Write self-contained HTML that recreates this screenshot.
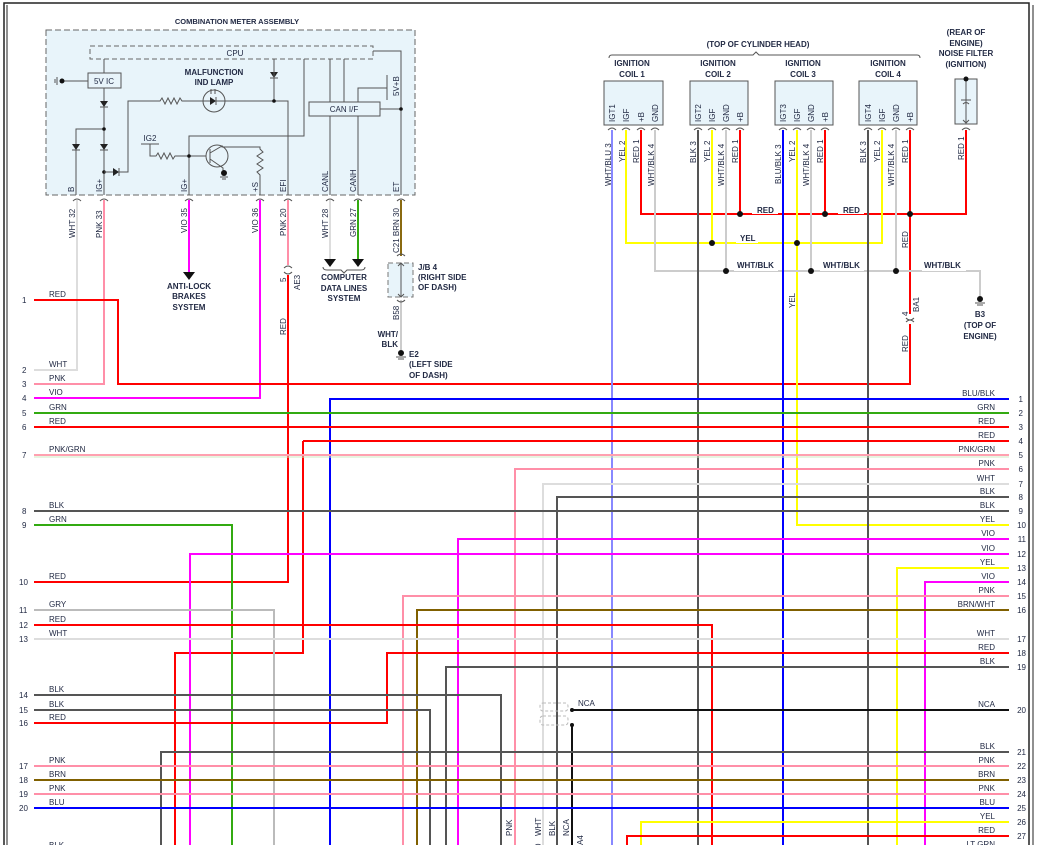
<!DOCTYPE html>
<html><head><meta charset="utf-8"><style>
html,body{margin:0;padding:0;background:#fff;width:1037px;height:845px;overflow:hidden}
svg{display:block}
text{font-family:"Liberation Sans",sans-serif;font-size:8px;fill:#222a44;font-weight:bold}
.n{font-weight:normal;font-size:8px}
.w{fill:none;stroke-width:2}
.t{fill:none;stroke:#555;stroke-width:1}
</style></head><body>
<svg width="1037" height="845" viewBox="0 0 1037 845" xmlns="http://www.w3.org/2000/svg">
<!-- frame -->
<path d="M4 845V3H1029V845" fill="none" stroke="#222" stroke-width="1.5"/>
<path d="M7 845V5" stroke="#222" stroke-width="1"/>
<path d="M1033 845V5" stroke="#222" stroke-width="1"/>

<!-- meter box -->
<rect x="46" y="30" width="369" height="165" fill="#e8f4fa" stroke="#666" stroke-dasharray="6,3"/>
<text x="237" y="24" text-anchor="middle" style="font-size:7.5px">COMBINATION METER ASSEMBLY</text>
<rect x="90" y="46" width="283" height="13" fill="none" stroke="#666" stroke-dasharray="5,3"/>
<text x="235" y="56" text-anchor="middle" class="n">CPU</text>
<rect x="88" y="73" width="33" height="15" fill="#e8f4fa" stroke="#555"/>
<text x="104" y="84" text-anchor="middle" class="n">5V IC</text>
<path class="t" d="M60 81H88M57 77V85M55 79V83"/><circle cx="62" cy="81" r="2.5" fill="#111"/>
<path class="t" d="M104 59V73M104 88V195M104 129H76V195"/>
<path d="M100 101h8l-4 6zM100 144h8l-4 6zM72 144h8l-4 6zM270 72h8l-4 6z" fill="#222"/>
<path class="t" d="M100 107h8M100 150h8M72 150h8M270 78h8"/>
<circle cx="104" cy="129" r="1.8" fill="#111"/><circle cx="104" cy="172" r="1.8" fill="#111"/>
<path class="t" d="M104 172H128V101H160l2-3 3 6 3-6 3 6 3-6 3 6 3-6 2 3H288V195M274 59V101"/>
<path d="M113 168v8l6-4z" fill="#222"/><path class="t" d="M119 168v8"/>
<circle cx="214" cy="101" r="11" fill="none" stroke="#555"/>
<path d="M210 97v8l6-4z" fill="#222"/><path class="t" d="M216 97v8M211 89v5M215 89v5"/>
<circle cx="274" cy="101" r="1.8" fill="#111"/>
<text x="214" y="75" text-anchor="middle">MALFUNCTION</text><text x="214" y="85" text-anchor="middle">IND LAMP</text>
<text x="150" y="141" text-anchor="middle" class="n">IG2</text>
<path class="t" d="M141 144H159M150 144V156H156l2-3 3 6 3-6 3 6 3-6 3 6 2-3H206M189 156V195M189 156V136H304V59"/>
<circle cx="189" cy="156" r="1.8" fill="#111"/>
<circle cx="217" cy="156" r="11" fill="none" stroke="#555"/>
<path class="t" d="M210 149V163M210 153L222 146V147H260V149l3 3-6 4 6 4-6 4 6 4-6 4 3 3V195M210 159L223 168V172"/>
<circle cx="224" cy="173" r="3" fill="#111"/><path class="t" d="M220 177h8M222 179h4"/>
<path class="t" d="M330 59V195M344 59V102M358 116V195M358 102V88H387M387 75V100M373 51H401V195M380 109H401"/>
<rect x="309" y="102" width="71" height="14" fill="#e8f4fa" stroke="#555"/>
<text x="344" y="112" text-anchor="middle" class="n">CAN I/F</text>
<circle cx="401" cy="109" r="1.8" fill="#111"/>
<g class="n">
<text transform="translate(399,96) rotate(-90)" class="n">5V+B</text>
<text transform="translate(74,192) rotate(-90)" class="n">B</text>
<text transform="translate(102,192) rotate(-90)" class="n">IG+</text>
<text transform="translate(187,192) rotate(-90)" class="n">IG+</text>
<text transform="translate(258,192) rotate(-90)" class="n">+S</text>
<text transform="translate(286,192) rotate(-90)" class="n">EFI</text>
<text transform="translate(328,192) rotate(-90)" class="n">CANL</text>
<text transform="translate(356,192) rotate(-90)" class="n">CANH</text>
<text transform="translate(399,192) rotate(-90)" class="n">ET</text>
</g>
<!-- meter wires -->
<path class="w" stroke="#ddd" d="M77 200V370H34"/>
<path class="w" stroke="#ff8fa8" d="M104 200V384H34"/>
<path class="w" stroke="#f0f" d="M189 200V272"/>
<path d="M183 272h12l-6 8z" fill="#111"/>
<text x="189" y="289" text-anchor="middle">ANTI-LOCK</text><text x="189" y="299" text-anchor="middle">BRAKES</text><text x="189" y="310" text-anchor="middle">SYSTEM</text>
<path class="w" stroke="#f0f" d="M260 200V398H34"/>
<path class="w" stroke="#ff8fa8" d="M288 200V265"/>
<path class="w" stroke="#f00" d="M288 275V582H34"/>
<path class="w" stroke="#ddd" d="M330 200V260"/><path d="M324 259h12l-6 8z" fill="#111"/>
<path class="w" stroke="#33aa11" d="M358 200V260"/><path d="M352 259h12l-6 8z" fill="#111"/>
<path class="t" d="M323 267q0 3 4 3h14l3 3 3-3h14q4 0 4-3"/>
<text x="344" y="280" text-anchor="middle">COMPUTER</text><text x="344" y="291" text-anchor="middle">DATA LINES</text><text x="344" y="301" text-anchor="middle">SYSTEM</text>
<path class="w" stroke="#8a6a10" d="M401 200V256"/>
<rect x="388" y="263" width="25" height="34" fill="#e8f4fa" stroke="#777" stroke-dasharray="5,3"/>
<path class="t" d="M401 263V297M398 266l3-3 3 3M398 294l3 3 3-3"/>
<text x="418" y="270">J/B 4</text><text x="418" y="280">(RIGHT SIDE</text><text x="418" y="290">OF DASH)</text>
<path class="w" stroke="#ccc" d="M401 300V350"/>
<circle cx="401" cy="353" r="3" fill="#111"/><path class="t" d="M396 357h10M398 359h6"/>
<text x="409" y="357">E2</text><text x="409" y="367">(LEFT SIDE</text><text x="409" y="378">OF DASH)</text>
<text x="398" y="337" text-anchor="end">WHT/</text><text x="398" y="347" text-anchor="end">BLK</text>
<g class="t"><path d="M73 201q4-4 8 0M100 201q4-4 8 0M185 201q4-4 8 0M256 201q4-4 8 0M284 201q4-4 8 0M326 201q4-4 8 0M354 201q4-4 8 0M397 201q4-4 8 0M284 268q4-4 8 0M284 272q4 4 8 0M397 256q4-4 8 0M397 300q4 4 8 0"/></g>
<g>
<text transform="translate(75,238) rotate(-90)" class="n">WHT  32</text>
<text transform="translate(102,238) rotate(-90)" class="n">PNK  33</text>
<text transform="translate(187,233) rotate(-90)" class="n">VIO  35</text>
<text transform="translate(258,233) rotate(-90)" class="n">VIO  36</text>
<text transform="translate(286,236) rotate(-90)" class="n">PNK  20</text>
<text transform="translate(328,238) rotate(-90)" class="n">WHT  28</text>
<text transform="translate(356,237) rotate(-90)" class="n">GRN  27</text>
<text transform="translate(399,253) rotate(-90)" class="n">C21 BRN  30</text>
<text transform="translate(399,320) rotate(-90)" class="n">B58</text>
<text transform="translate(286,282) rotate(-90)" class="n">5</text>
<text transform="translate(300,290) rotate(-90)" class="n">AE3</text>
<text transform="translate(286,335) rotate(-90)" class="n">RED</text>
</g>

<!-- ignition coils -->
<text x="758" y="47" text-anchor="middle">(TOP OF CYLINDER HEAD)</text>
<path class="t" d="M609 58q0-3 3-3H753l3-3 3 3H917q3 0 3 3"/>
<g text-anchor="middle">
<text x="632" y="66">IGNITION</text><text x="632" y="77">COIL 1</text>
<text x="718" y="66">IGNITION</text><text x="718" y="77">COIL 2</text>
<text x="803" y="66">IGNITION</text><text x="803" y="77">COIL 3</text>
<text x="888" y="66">IGNITION</text><text x="888" y="77">COIL 4</text>
<text x="966" y="35">(REAR OF</text><text x="966" y="46">ENGINE)</text><text x="966" y="56">NOISE FILTER</text><text x="966" y="67">(IGNITION)</text>
</g>
<g fill="#e8f4fa" stroke="#555">
<rect x="604" y="81" width="59" height="44"/><rect x="690" y="81" width="58" height="44"/>
<rect x="775" y="81" width="58" height="44"/><rect x="859" y="81" width="58" height="44"/>
<rect x="955" y="79" width="22" height="45"/>
</g>
<path class="t" d="M966 79V124M961 100h10M963 104q3-3 6 0M963 120l3 3 3-3"/><circle cx="966" cy="79" r="2.5" fill="#111"/>
<g class="n">
<text transform="translate(615,122) rotate(-90)" class="n">IGT1</text><text transform="translate(629,122) rotate(-90)" class="n">IGF</text><text transform="translate(644,122) rotate(-90)" class="n">+B</text><text transform="translate(658,122) rotate(-90)" class="n">GND</text>
<text transform="translate(701,122) rotate(-90)" class="n">IGT2</text><text transform="translate(715,122) rotate(-90)" class="n">IGF</text><text transform="translate(729,122) rotate(-90)" class="n">GND</text><text transform="translate(743,122) rotate(-90)" class="n">+B</text>
<text transform="translate(786,122) rotate(-90)" class="n">IGT3</text><text transform="translate(800,122) rotate(-90)" class="n">IGF</text><text transform="translate(814,122) rotate(-90)" class="n">GND</text><text transform="translate(828,122) rotate(-90)" class="n">+B</text>
<text transform="translate(871,122) rotate(-90)" class="n">IGT4</text><text transform="translate(885,122) rotate(-90)" class="n">IGF</text><text transform="translate(899,122) rotate(-90)" class="n">GND</text><text transform="translate(913,122) rotate(-90)" class="n">+B</text>
</g>
<g class="t"><path d="M608 130q4-4 8 0M622 130q4-4 8 0M637 130q4-4 8 0M651 130q4-4 8 0M694 130q4-4 8 0M708 130q4-4 8 0M722 130q4-4 8 0M736 130q4-4 8 0M779 130q4-4 8 0M793 130q4-4 8 0M807 130q4-4 8 0M821 130q4-4 8 0M864 130q4-4 8 0M878 130q4-4 8 0M892 130q4-4 8 0M906 130q4-4 8 0M962 130q4-4 8 0M906 318q4 4 8 0M906 322q4-4 8 0"/></g>
<!-- coil wires -->
<path class="w" stroke="#f00" d="M641 130V214H966V130M740 130V214M825 130V214M910 130V314M910 324V384H118V300H34"/>
<path class="w" stroke="#ff0" d="M626 130V243H882V130M712 130V243M797 130V525H1009"/>
<path class="w" stroke="#ccc" d="M655 130V271H980V296M726 130V271M811 130V271M896 130V271"/>
<circle cx="980" cy="299" r="3" fill="#111"/><path class="t" d="M975 303h10M977 305h6"/>
<text x="980" y="317" text-anchor="middle">B3</text><text x="980" y="328" text-anchor="middle">(TOP OF</text><text x="980" y="339" text-anchor="middle">ENGINE)</text>
<path class="w" stroke="#88f" stroke-width="1.5" d="M612 130V845"/>
<path class="w" stroke="#555" d="M698 130V845M868 130V845"/>
<path class="w" stroke="#00f" d="M783 130V845"/>
<g fill="#111"><circle cx="740" cy="214" r="3"/><circle cx="825" cy="214" r="3"/><circle cx="910" cy="214" r="3"/><circle cx="712" cy="243" r="3"/><circle cx="797" cy="243" r="3"/><circle cx="726" cy="271" r="3"/><circle cx="811" cy="271" r="3"/><circle cx="896" cy="271" r="3"/></g>
<g fill="#fff"><rect x="752" y="206" width="26" height="8"/><rect x="838" y="206" width="26" height="8"/><rect x="736" y="235" width="22" height="8"/><rect x="734" y="262" width="44" height="9"/><rect x="820" y="262" width="44" height="9"/><rect x="922" y="262" width="44" height="9"/></g>
<text x="757" y="213">RED</text><text x="843" y="213">RED</text><text x="740" y="241">YEL</text>
<text x="737" y="268">WHT/BLK</text><text x="823" y="268">WHT/BLK</text><text x="924" y="268">WHT/BLK</text>
<g>
<text transform="translate(611,186) rotate(-90)" class="n">WHT/BLU  3</text>
<text transform="translate(625,162) rotate(-90)" class="n">YEL  2</text>
<text transform="translate(639,163) rotate(-90)" class="n">RED  1</text>
<text transform="translate(654,186) rotate(-90)" class="n">WHT/BLK  4</text>
<text transform="translate(696,163) rotate(-90)" class="n">BLK  3</text>
<text transform="translate(710,162) rotate(-90)" class="n">YEL  2</text>
<text transform="translate(724,186) rotate(-90)" class="n">WHT/BLK  4</text>
<text transform="translate(738,163) rotate(-90)" class="n">RED  1</text>
<text transform="translate(781,184) rotate(-90)" class="n">BLU/BLK  3</text>
<text transform="translate(795,162) rotate(-90)" class="n">YEL  2</text>
<text transform="translate(809,186) rotate(-90)" class="n">WHT/BLK  4</text>
<text transform="translate(823,163) rotate(-90)" class="n">RED  1</text>
<text transform="translate(866,163) rotate(-90)" class="n">BLK  3</text>
<text transform="translate(880,162) rotate(-90)" class="n">YEL  2</text>
<text transform="translate(894,186) rotate(-90)" class="n">WHT/BLK  4</text>
<text transform="translate(908,163) rotate(-90)" class="n">RED  1</text>
<text transform="translate(964,160) rotate(-90)" class="n">RED  1</text>
<text transform="translate(908,248) rotate(-90)" class="n">RED</text>
<text transform="translate(795,308) rotate(-90)" class="n">YEL</text>
<text transform="translate(908,352) rotate(-90)" class="n">RED</text>
<text transform="translate(908,316) rotate(-90)" class="n">4</text>
<text transform="translate(919,312) rotate(-90)" class="n">BA1</text>
</g>

<!-- harness rows -->
<g class="w">
<path stroke="#00f" d="M330 845V399H1009"/>
<path stroke="#33aa11" d="M34 413H1009"/>
<path stroke="#f00" d="M34 427H1009"/>
<path stroke="#f00" d="M303 441H1009M303 441V653H175V845"/>
<path stroke="#ffa0b0" d="M34 455H1009"/>
<path stroke="#cfe8c0" stroke-width="1" d="M34 457H1009"/>
<path stroke="#ff8fa8" d="M515 845V469H1009"/>
<path stroke="#ddd" d="M543 845V484H1009"/>
<path stroke="#555" d="M557 845V497H1009"/>
<path stroke="#555" d="M34 511H1009"/>
<path stroke="#33aa11" d="M34 525H232V845"/>
<path stroke="#f0f" d="M458 845V539H1009"/>
<path stroke="#f0f" d="M190 845V554H1009"/>
<path stroke="#ff0" d="M897 845V568H1009"/>
<path stroke="#f0f" d="M925 845V582H1009"/>
<path stroke="#ff8fa8" d="M403 845V596H1009"/>
<path stroke="#806000" d="M417 845V610H1009"/>
<path stroke="#bbb" d="M34 610H274V845"/>
<path stroke="#f00" d="M34 625H712V845"/>
<path stroke="#ddd" d="M34 639H1009"/>
<path stroke="#f00" d="M34 723H387V653H1009"/>
<path stroke="#555" d="M446 845V667H1009"/>
<path stroke="#555" d="M34 695H501V845"/>
<path stroke="#555" d="M34 710H430V845"/>
<path stroke="#111" d="M572 710H1009M572 725V845"/>
<path stroke="#555" d="M161 845V752H1009"/>
<path stroke="#ff8fa8" d="M34 766H1009"/>
<path stroke="#806000" d="M34 780H1009"/>
<path stroke="#ff8fa8" d="M34 794H1009"/>
<path stroke="#00f" d="M34 808H1009"/>
<path stroke="#ff0" d="M641 845V822H1009"/>
<path stroke="#f00" d="M627 845V836H1009"/>
</g>
<rect x="540" y="703" width="28" height="8" rx="3" fill="none" stroke="#bbb" stroke-dasharray="3,2"/>
<rect x="540" y="716" width="28" height="9" rx="3" fill="none" stroke="#bbb" stroke-dasharray="3,2"/>
<circle cx="572" cy="710" r="2" fill="#111"/><circle cx="572" cy="725" r="2" fill="#111"/>
<text x="578" y="706" class="n">NCA</text>
<g>
<text transform="translate(512,836) rotate(-90)" class="n">PNK</text>
<text transform="translate(541,836) rotate(-90)" class="n">WHT</text>
<text transform="translate(541,848) rotate(-90)" class="n">0</text>
<text transform="translate(555,836) rotate(-90)" class="n">BLK</text>
<text transform="translate(569,836) rotate(-90)" class="n">NCA</text>
<text transform="translate(583,845) rotate(-90)" class="n">A4</text>
</g>
<!-- left labels -->
<g class="n">
<text x="22" y="303" class="n">1</text><text x="49" y="297" class="n">RED</text>
<text x="22" y="373" class="n">2</text><text x="49" y="367" class="n">WHT</text>
<text x="22" y="387" class="n">3</text><text x="49" y="381" class="n">PNK</text>
<text x="22" y="401" class="n">4</text><text x="49" y="395" class="n">VIO</text>
<text x="22" y="416" class="n">5</text><text x="49" y="410" class="n">GRN</text>
<text x="22" y="430" class="n">6</text><text x="49" y="424" class="n">RED</text>
<text x="22" y="458" class="n">7</text><text x="49" y="452" class="n">PNK/GRN</text>
<text x="22" y="514" class="n">8</text><text x="49" y="508" class="n">BLK</text>
<text x="22" y="528" class="n">9</text><text x="49" y="522" class="n">GRN</text>
<text x="19" y="585" class="n">10</text><text x="49" y="579" class="n">RED</text>
<text x="19" y="613" class="n">11</text><text x="49" y="607" class="n">GRY</text>
<text x="19" y="628" class="n">12</text><text x="49" y="622" class="n">RED</text>
<text x="19" y="642" class="n">13</text><text x="49" y="636" class="n">WHT</text>
<text x="19" y="698" class="n">14</text><text x="49" y="692" class="n">BLK</text>
<text x="19" y="713" class="n">15</text><text x="49" y="707" class="n">BLK</text>
<text x="19" y="726" class="n">16</text><text x="49" y="720" class="n">RED</text>
<text x="19" y="769" class="n">17</text><text x="49" y="763" class="n">PNK</text>
<text x="19" y="783" class="n">18</text><text x="49" y="777" class="n">BRN</text>
<text x="19" y="797" class="n">19</text><text x="49" y="791" class="n">PNK</text>
<text x="19" y="811" class="n">20</text><text x="49" y="805" class="n">BLU</text>
<text x="49" y="848" class="n">BLK</text>
</g>
<!-- right labels -->
<g text-anchor="end">
<text x="995" y="396" class="n">BLU/BLK</text><text x="1023" y="402" class="n">1</text>
<text x="995" y="410" class="n">GRN</text><text x="1023" y="416" class="n">2</text>
<text x="995" y="424" class="n">RED</text><text x="1023" y="430" class="n">3</text>
<text x="995" y="438" class="n">RED</text><text x="1023" y="444" class="n">4</text>
<text x="995" y="452" class="n">PNK/GRN</text><text x="1023" y="458" class="n">5</text>
<text x="995" y="466" class="n">PNK</text><text x="1023" y="472" class="n">6</text>
<text x="995" y="481" class="n">WHT</text><text x="1023" y="487" class="n">7</text>
<text x="995" y="494" class="n">BLK</text><text x="1023" y="500" class="n">8</text>
<text x="995" y="508" class="n">BLK</text><text x="1023" y="514" class="n">9</text>
<text x="995" y="522" class="n">YEL</text><text x="1026" y="528" class="n">10</text>
<text x="995" y="536" class="n">VIO</text><text x="1026" y="542" class="n">11</text>
<text x="995" y="551" class="n">VIO</text><text x="1026" y="557" class="n">12</text>
<text x="995" y="565" class="n">YEL</text><text x="1026" y="571" class="n">13</text>
<text x="995" y="579" class="n">VIO</text><text x="1026" y="585" class="n">14</text>
<text x="995" y="593" class="n">PNK</text><text x="1026" y="599" class="n">15</text>
<text x="995" y="607" class="n">BRN/WHT</text><text x="1026" y="613" class="n">16</text>
<text x="995" y="636" class="n">WHT</text><text x="1026" y="642" class="n">17</text>
<text x="995" y="650" class="n">RED</text><text x="1026" y="656" class="n">18</text>
<text x="995" y="664" class="n">BLK</text><text x="1026" y="670" class="n">19</text>
<text x="995" y="707" class="n">NCA</text><text x="1026" y="713" class="n">20</text>
<text x="995" y="749" class="n">BLK</text><text x="1026" y="755" class="n">21</text>
<text x="995" y="763" class="n">PNK</text><text x="1026" y="769" class="n">22</text>
<text x="995" y="777" class="n">BRN</text><text x="1026" y="783" class="n">23</text>
<text x="995" y="791" class="n">PNK</text><text x="1026" y="797" class="n">24</text>
<text x="995" y="805" class="n">BLU</text><text x="1026" y="811" class="n">25</text>
<text x="995" y="819" class="n">YEL</text><text x="1026" y="825" class="n">26</text>
<text x="995" y="833" class="n">RED</text><text x="1026" y="839" class="n">27</text>
<text x="995" y="847" class="n">LT GRN</text>
</g>
</svg>
</body></html>
